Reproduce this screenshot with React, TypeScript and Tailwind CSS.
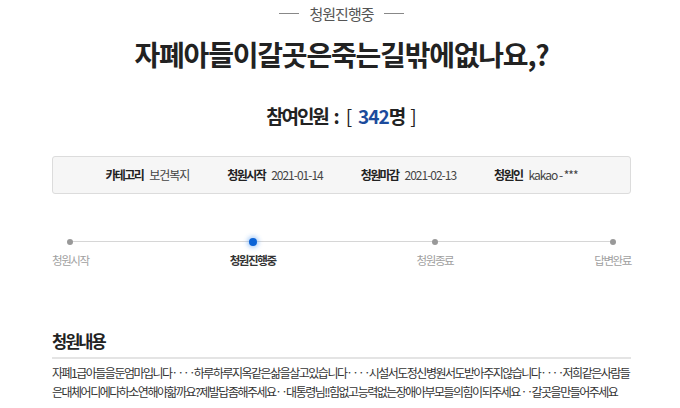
import React from "react";

const KR = { fontFamily: '"Noto Sans CJK KR", "Noto Sans", sans-serif' };

function InfoItem({ label, value }: { label: string; value: string }) {
  return (
    <div className="flex items-center gap-[6px]">
      <span className="font-bold text-[#222] tracking-[-1.6px]">{label}</span>
      <span className="text-[#444] tracking-[-1px]">{value}</span>
    </div>
  );
}

function Step({ label, active }: { label: string; active?: boolean }) {
  return (
    <div className="flex flex-col items-center">
      <div className="h-[12px] flex items-center justify-center">
        {active ? (
          <div className="w-[8px] h-[8px] rounded-full bg-[#0b63d6] shadow-[0_0_4px_2px_rgba(80,150,240,0.45)]" />
        ) : (
          <div className="w-[6px] h-[6px] rounded-full bg-[#999]" />
        )}
      </div>
      <span
        className={
          "mt-[5px] text-[11.5px] leading-[14px] tracking-[-1.4px] " +
          (active ? "font-bold text-[#333]" : "text-[#a0a0a0]")
        }
      >
        {label}
      </span>
    </div>
  );
}

export default function App() {
  return (
    <div className="w-[680px] h-[408px] bg-white overflow-hidden" style={KR}>
      <div className="pl-[52px] w-[631px]">
        {/* top status */}
        <div className="flex items-center justify-center gap-[10px] pt-[3px] h-[24px]">
          <div className="w-[20px] h-px bg-[#888]" />
          <span className="text-[15px] leading-[20px] text-[#555] tracking-[-1px]">청원진행중</span>
          <div className="w-[20px] h-px bg-[#888]" />
        </div>

        {/* title */}
        <h1 className="mt-[12px] text-center text-[28px] leading-[36px] font-bold text-[#222] tracking-[-1.2px]">
          자폐아들이갈곳은죽는길밖에없나요,?
        </h1>

        {/* participants */}
        <div className="mt-[31px] flex items-center justify-center text-[19px] leading-[26px] font-bold text-[#222]">
          <span className="tracking-[-2.2px]">참여인원</span>
          <span className="ml-[6px]">:</span>
          <span className="ml-[6px] font-normal">[</span>
          <span className="ml-[6px] text-[#1c4b9c] tracking-[-1px]">342</span>
          <span className="tracking-[-2px]">명</span>
          <span className="ml-[6px] font-normal">]</span>
        </div>

        {/* info box */}
        <div className="mt-[27px] h-[38px] border border-[#dcdcdc] rounded-[3px] bg-[#f6f6f6] flex items-center justify-center gap-[38px] text-[12px] leading-[16px]">
          <InfoItem label="카테고리" value="보건복지" />
          <InfoItem label="청원시작" value="2021-01-14" />
          <InfoItem label="청원마감" value="2021-02-13" />
          <InfoItem label="청원인" value="kakao - ***" />
        </div>

        {/* timeline */}
        <div className="relative mt-[42px]">
          <div className="absolute left-[18px] right-[19px] top-[5px] h-px bg-[#d6d6d6]" />
          <div className="relative flex justify-between">
            <Step label="청원시작" />
            <Step label="청원진행중" active />
            <Step label="청원종료" />
            <Step label="답변완료" />
          </div>
        </div>

        {/* content */}
        <h2 className="mt-[64px] text-[16.5px] leading-[20px] font-bold text-[#222] tracking-[-2px]">청원내용</h2>
        <div className="mt-[6px] h-[2px] bg-[#e4e4e4]" />
        <div className="mt-[4px] text-[12px] leading-[19px] text-[#333] tracking-[-1.5px]">
          <p className="whitespace-nowrap">
            자폐1급아들을둔엄마입니다‥ ‥하루하루지옥같은삶을살고있습니다‥ ‥시설서도정신병원서도받아주지않습니다‥ ‥저희같은사람들
          </p>
          <p className="whitespace-nowrap">
            은대체어디에다하소연해야핢까요?제발답좀해주세요‥대통령님!!힘없고능력없는장애아부모들의힘이되주세요 ‥갈곳을만들어주세요
          </p>
        </div>
      </div>
    </div>
  );
}
